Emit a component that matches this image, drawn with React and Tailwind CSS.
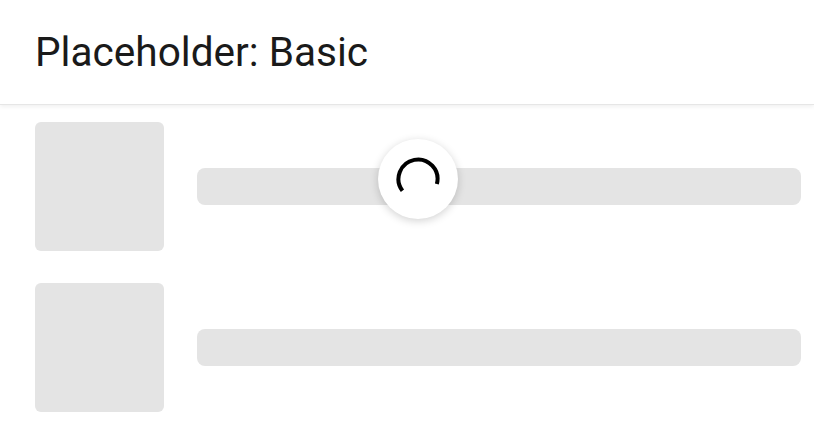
import React from "react";

// spinner arc, gap at the bottom
const Spinner = () => (
  <svg width="48" height="48" viewBox="0 0 48 48" fill="none">
    <path
      d="M8.43 35.74 A19.5 19.5 0 1 1 42.84 29.05"
      stroke="#000"
      strokeWidth="4"
    />
  </svg>
);

const Row = () => (
  <div className="flex items-center">
    <div className="w-[129px] h-[129px] rounded-[6px] bg-[#e4e4e4] shrink-0" />
    <div className="ml-[33px] flex-1 h-[37px] rounded-[8px] bg-[#e4e4e4]" />
  </div>
);

export default function App() {
  return (
    <div
      className="relative w-[814px] h-[436px] bg-white overflow-hidden"
      style={{ fontFamily: "Roboto, 'Noto Sans', sans-serif" }}
    >
      <header className="h-[105px] pl-[35px] pt-[32px] bg-white border-b border-[#e6e6e6] shadow-[0_2px_4px_rgba(0,0,0,0.06)]">
        <h1 className="text-[40.6px] leading-[40px] text-[#1a1a1a] font-normal">
          Placeholder: Basic
        </h1>
      </header>

      <div className="pl-[35px] pr-[13px] pt-[17px] flex flex-col gap-[32px]">
        <Row />
        <Row />
      </div>

      {/* loading bubble over the list */}
      <div className="absolute left-[378px] top-[139px] w-[80px] h-[80px] rounded-full bg-white shadow-[0_2px_8px_rgba(0,0,0,0.18)] flex items-center justify-center">
        <Spinner />
      </div>
    </div>
  );
}
